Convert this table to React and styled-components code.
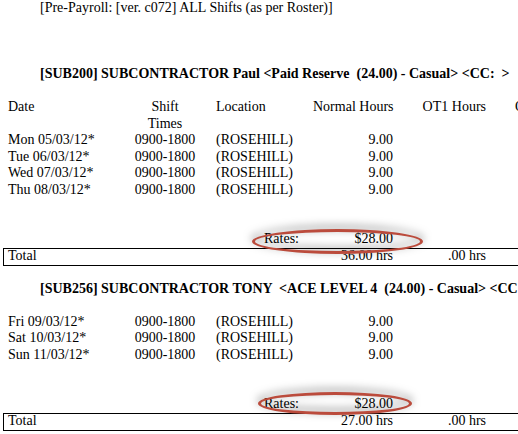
import React from "react";
import styled, { createGlobalStyle } from "styled-components";

const GlobalStyle = createGlobalStyle`
  body {
    margin: 0;
    background: #fff;
  }
`;

const Page = styled.div`
  width: 518px;
  height: 434px;
  overflow: hidden;
  font-family: "Liberation Serif", "Times New Roman", serif;
  font-size: 14px;
  line-height: 16.5px;
  color: #000;
`;

const ReportTitle = styled.div`
  padding-left: 40px;
  margin-bottom: 49.5px;
  white-space: nowrap;
`;

const Section = styled.section`
  & + & {
    margin-top: 15px;
  }
`;

const Heading = styled.div`
  padding-left: 40px;
  margin-bottom: 16.5px;
  font-weight: bold;
  white-space: pre;
`;

const Row = styled.div`
  display: grid;
  grid-template-columns: 112px 90px 103px 80px 93px 1fr;
  padding-left: ${(p) => p.$indent || 8}px;
  white-space: nowrap;
`;

const Cell = styled.div`
  text-align: ${(p) => p.$align || "left"};
  padding-left: ${(p) => p.$pad || 0}px;
`;

const Rows = styled.div`
  margin-bottom: 33px;
`;

const RatesRow = styled.div`
  position: relative;
  display: grid;
  grid-template-columns: 256px 49px 80px;
  padding-left: 8px;
`;

const RateMark = styled.div`
  position: absolute;
  z-index: 1;
  left: ${(p) => p.$left}px;
  top: ${(p) => p.$top}px;
  width: ${(p) => p.$width}px;
  height: ${(p) => p.$height}px;
  box-sizing: border-box;
  border: 3px solid #bb4b3c;
  border-radius: 50%;
  filter: drop-shadow(0 -3px 4px rgba(0, 0, 0, 0.55));
`;

const TotalBox = styled.div`
  margin-left: 3px;
  width: 560px;
  border: 1px solid #000;
  line-height: 13px;
  padding-bottom: 3px;
`;

const sections = [
  {
    heading:
      "[SUB200] SUBCONTRACTOR Paul <Paid Reserve  (24.00) - Casual> <CC:  >",
    showColumns: true,
    rows: ["Mon 05/03/12*", "Tue 06/03/12*", "Wed 07/03/12*", "Thu 08/03/12*"],
    total: "36.00 hrs",
    mark: { left: 252, top: -2, width: 171, height: 25 },
  },
  {
    heading:
      "[SUB256] SUBCONTRACTOR TONY  <ACE LEVEL 4  (24.00) - Casual> <CC:  >",
    showColumns: false,
    rows: ["Fri 09/03/12*", "Sat 10/03/12*", "Sun 11/03/12*"],
    total: "27.00 hrs",
    mark: { left: 258, top: -4, width: 154, height: 23 },
  },
];

const App = () => {
  return (
    <Page>
      <GlobalStyle />
      <ReportTitle>[Pre-Payroll: [ver. c072] ALL Shifts (as per Roster)]</ReportTitle>
      {sections.map((s) => (
        <Section key={s.heading}>
          <Heading>{s.heading}</Heading>
          <Rows>
            {s.showColumns && (
              <Row>
                <Cell>Date</Cell>
                <Cell $align="center">
                  Shift
                  <br />
                  Times
                </Cell>
                <Cell $pad={6}>Location</Cell>
                <Cell $align="right">Normal Hours</Cell>
                <Cell $align="right">OT1 Hours</Cell>
                <Cell $pad={29}>OT2 Hours</Cell>
              </Row>
            )}
            {s.rows.map((d) => (
              <Row key={d}>
                <Cell>{d}</Cell>
                <Cell $align="center">0900-1800</Cell>
                <Cell $pad={6}>(ROSEHILL)</Cell>
                <Cell $align="right">9.00</Cell>
                <Cell />
                <Cell />
              </Row>
            ))}
          </Rows>
          <RatesRow>
            <span />
            <span>Rates:</span>
            <Cell $align="right">$28.00</Cell>
            <RateMark
              $left={s.mark.left}
              $top={s.mark.top}
              $width={s.mark.width}
              $height={s.mark.height}
            />
          </RatesRow>
          <TotalBox>
            <Row $indent={4}>
              <Cell>Total</Cell>
              <Cell />
              <Cell />
              <Cell $align="right">{s.total}</Cell>
              <Cell $align="right">.00 hrs</Cell>
              <Cell />
            </Row>
          </TotalBox>
        </Section>
      ))}
    </Page>
  );
};

export default App;
